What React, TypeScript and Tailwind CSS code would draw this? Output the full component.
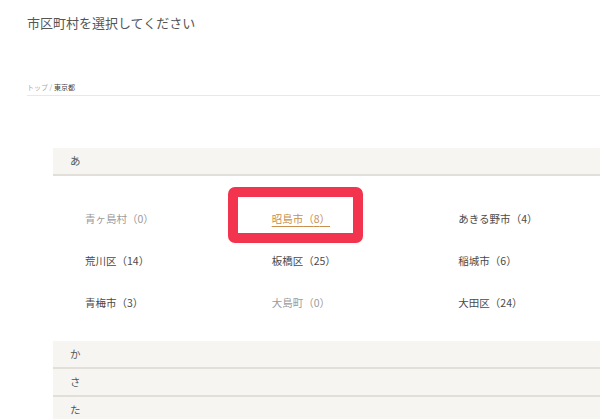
import React from "react";

type Item = { name: string; count: number; highlight?: boolean };

const items: Item[] = [
  { name: "青ヶ島村", count: 0 },
  { name: "昭島市", count: 8, highlight: true },
  { name: "あきる野市", count: 4 },
  { name: "荒川区", count: 14 },
  { name: "板橋区", count: 25 },
  { name: "稲城市", count: 6 },
  { name: "青梅市", count: 3 },
  { name: "大島町", count: 0 },
  { name: "大田区", count: 24 },
];

function Header({ label }: { label: string }) {
  return (
    <div className="h-[28px] bg-[#f7f5f1] border-b-2 border-[#e2ded8] pl-[17px] flex items-center text-[10.5px] text-[#555]">
      {label}
    </div>
  );
}

export default function App() {
  return (
    <div
      className="w-[600px] h-[419px] overflow-hidden bg-white"
      style={{ fontFamily: '"Noto Sans CJK JP", "Noto Sans", sans-serif' }}
    >
      <div className="pl-[27px] pt-[13px] h-[78px]">
        <h1 className="text-[13px] leading-[20px] text-[#555] font-normal">
          市区町村を選択してください
        </h1>
      </div>
      <div className="ml-[27px] h-[18px] border-b border-[#ebe8e3] text-[7px] leading-[14px] pt-[2px]">
        <span className="text-[#aaa]">トップ / </span>
        <span className="text-[#444]">東京都</span>
      </div>
      <div className="ml-[53px] w-[560px] mt-[52px]">
        <Header label="あ" />
        <div className="grid grid-cols-3 pt-[22px] pb-[17px]">
          {items.map((it) => (
            <div key={it.name} className="relative h-[42px] flex items-center pl-[32px]">
              {it.highlight ? (
                <>
                  <span className="text-[10.5px] text-[#c8904c] underline underline-offset-[3px] decoration-[#c8904c]">
                    {it.name}（{it.count}）
                  </span>
                  <div className="absolute left-[-12px] top-[-11px] w-[135px] h-[56px] border-[10px] border-[#f2344f] rounded-[7px]" />
                </>
              ) : (
                <span
                  className={
                    "text-[10.5px] " +
                    (it.count === 0 ? "text-[#9a9a9a]" : "text-[#4a4a4a]")
                  }
                >
                  {it.name}（{it.count}）
                </span>
              )}
            </div>
          ))}
        </div>
        <Header label="か" />
        <Header label="さ" />
        <Header label="た" />
      </div>
    </div>
  );
}
